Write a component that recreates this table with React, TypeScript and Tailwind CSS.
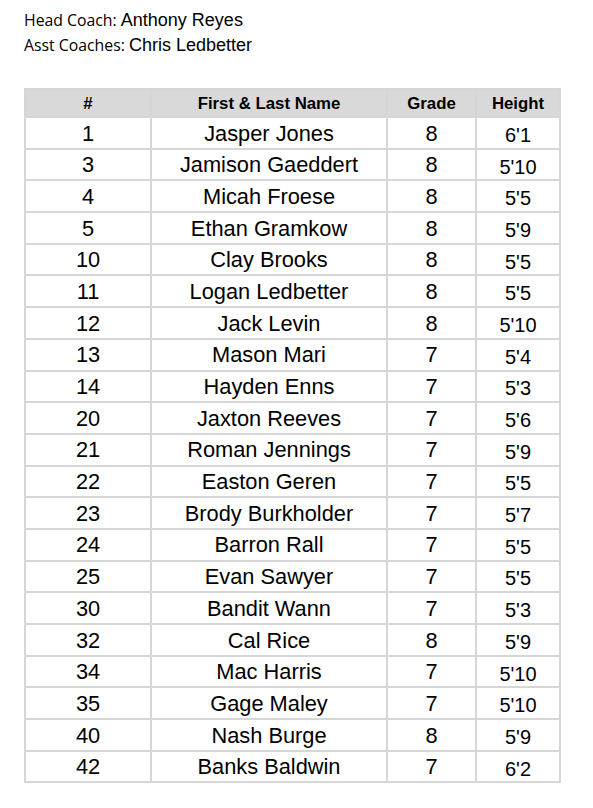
const roster: [string, string, string, string][] = [
  ["1", "Jasper Jones", "8", "6'1"],
  ["3", "Jamison Gaeddert", "8", "5'10"],
  ["4", "Micah Froese", "8", "5'5"],
  ["5", "Ethan Gramkow", "8", "5'9"],
  ["10", "Clay Brooks", "8", "5'5"],
  ["11", "Logan Ledbetter", "8", "5'5"],
  ["12", "Jack Levin", "8", "5'10"],
  ["13", "Mason Mari", "7", "5'4"],
  ["14", "Hayden Enns", "7", "5'3"],
  ["20", "Jaxton Reeves", "7", "5'6"],
  ["21", "Roman Jennings", "7", "5'9"],
  ["22", "Easton Geren", "7", "5'5"],
  ["23", "Brody Burkholder", "7", "5'7"],
  ["24", "Barron Rall", "7", "5'5"],
  ["25", "Evan Sawyer", "7", "5'5"],
  ["30", "Bandit Wann", "7", "5'3"],
  ["32", "Cal Rice", "8", "5'9"],
  ["34", "Mac Harris", "7", "5'10"],
  ["35", "Gage Maley", "7", "5'10"],
  ["40", "Nash Burge", "8", "5'9"],
  ["42", "Banks Baldwin", "7", "6'2"],
];

const cols = "grid grid-cols-[126px_236px_89px_84px]";
const cell = "flex items-center justify-center border-r-2 border-b-2 border-[#d6d6d6]";

export default function App() {
  return (
    <div className="min-h-screen bg-white px-6 pt-[8px] text-black">
      <div className="leading-[25px]">
        <p>
          <span className="font-['Open_Sans',sans-serif] text-[15.8px]">Head Coach: </span>
          <span className="font-['Liberation_Sans',Arial,sans-serif] text-[18px]">Anthony Reyes</span>
        </p>
        <p>
          <span className="font-['Open_Sans',sans-serif] text-[15.8px]">Asst Coaches: </span>
          <span className="font-['Liberation_Sans',Arial,sans-serif] text-[18px]">Chris Ledbetter</span>
        </p>
      </div>

      <div className="mt-[30px] w-[537px] border-t-2 border-l-2 border-[#d6d6d6] font-['Liberation_Sans',Arial,sans-serif]">
        <div className={`${cols} bg-[#d9d9d9] text-[16.8px] font-bold`}>
          <div className={`${cell} h-[28px] pt-[2px]`}>#</div>
          <div className={`${cell} h-[28px] pt-[2px]`}>First &amp; Last Name</div>
          <div className={`${cell} h-[28px] pt-[2px]`}>Grade</div>
          <div className={`${cell} h-[28px] pt-[2px]`}>Height</div>
        </div>
        {roster.map(([num, name, grade, height]) => (
          <div key={num} className={`${cols} text-[21.8px]`}>
            <div className={`${cell} h-[31.7px] pt-[2px]`}>{num}</div>
            <div className={`${cell} h-[31.7px] pt-[2px]`}>{name}</div>
            <div className={`${cell} h-[31.7px] pt-[2px]`}>{grade}</div>
            <div className={`${cell} h-[31.7px] text-[20px] pt-[4px]`}>{height}</div>
          </div>
        ))}
      </div>
    </div>
  );
}
